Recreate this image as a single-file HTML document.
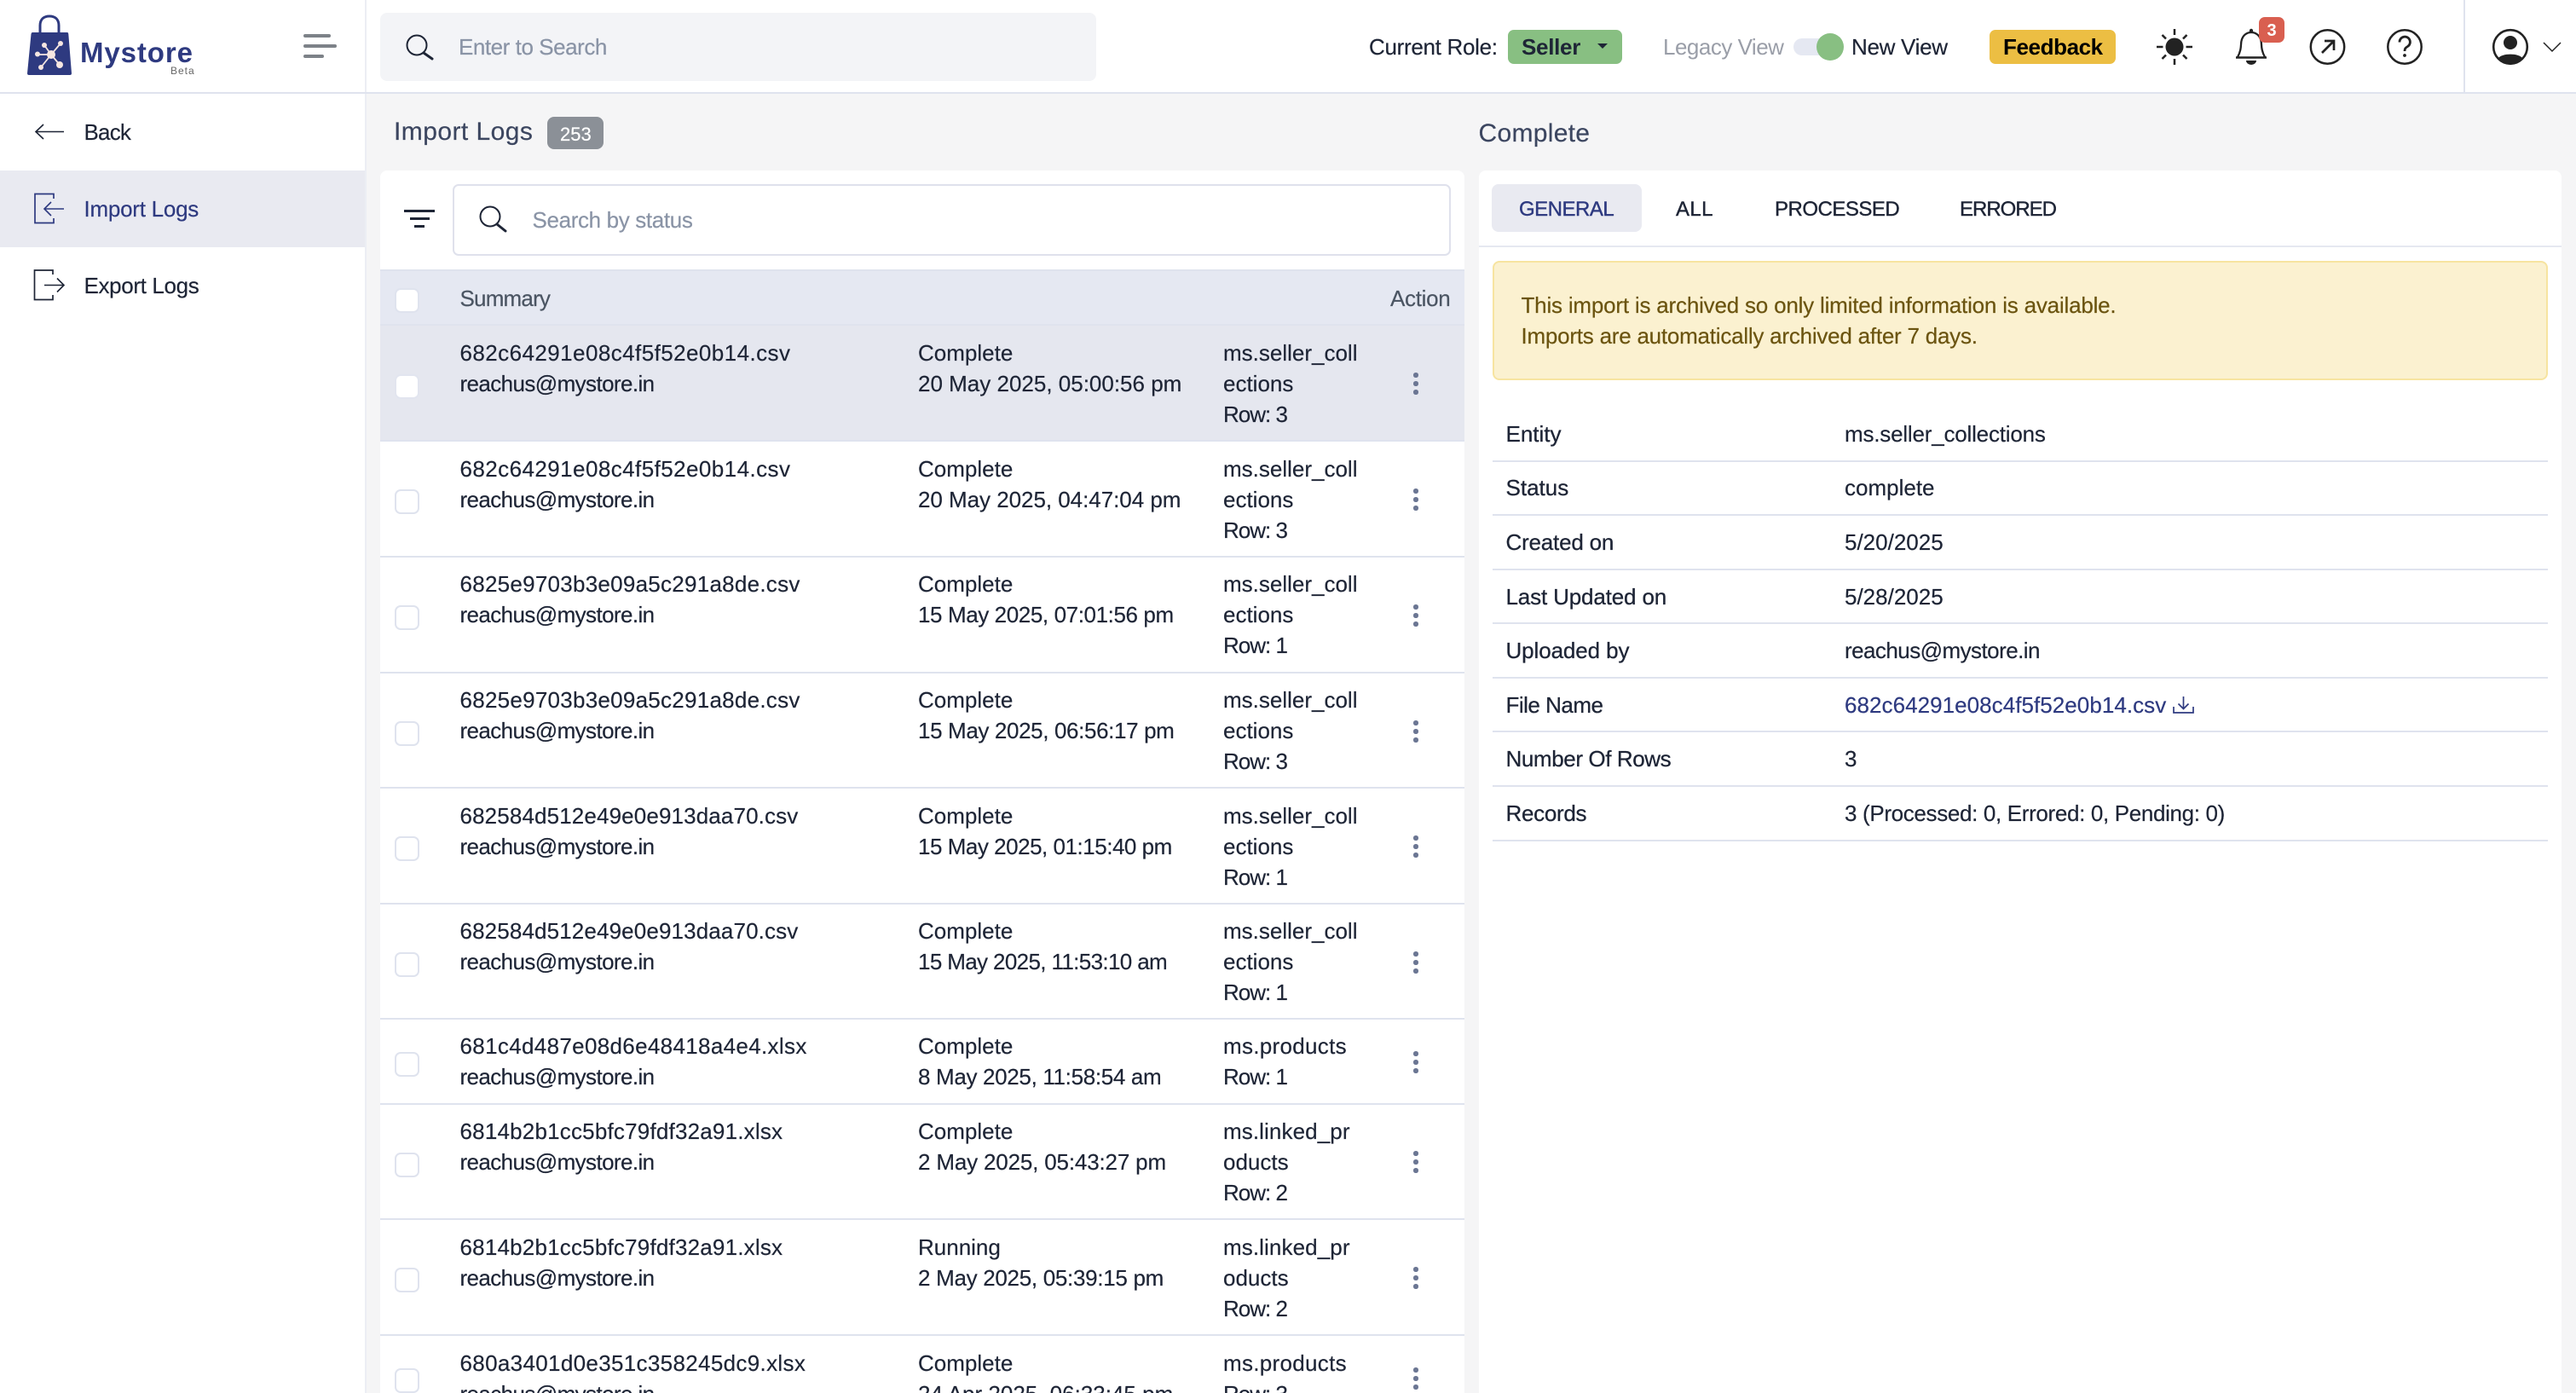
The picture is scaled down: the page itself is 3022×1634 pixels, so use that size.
<!DOCTYPE html>
<html lang="en">
<head>
<meta charset="utf-8">
<title>Import Logs</title>
<style>
*{box-sizing:border-box;margin:0;padding:0}
html,body{width:3022px;height:1634px;overflow:hidden;background:#f5f5f6}
body{position:relative;font-family:"Liberation Sans",sans-serif;font-size:26px;color:#1e2536;line-height:36px}
.a{position:absolute;white-space:nowrap}
.box{position:absolute}
.t{position:absolute;white-space:nowrap;height:36px;line-height:36px;-webkit-text-stroke:.2px currentColor}
.b{font-weight:700;-webkit-text-stroke:0}
#ov{position:absolute;left:0;top:0;width:3022px;height:1634px;pointer-events:none}
.row{position:absolute;left:0;width:1272px;border-bottom:2px solid #dfe3ee;background:#fff}
.row.sel{background:#e5e7ef}
.n{left:93.5px;top:14px;letter-spacing:.4px}
.e{left:93.5px;top:50px;letter-spacing:-.6px}
.s{left:631px;top:14px}
.d{left:631px;top:50px}
.m1{left:989px;top:14px}
.m2{left:989px;top:50px}
.m3{left:989px;top:86px;letter-spacing:-1px}
.u .t{margin-top:-1px}
.cb{position:absolute;left:16.5px;width:29px;height:29px;background:#fff;border:2px solid #dfe3ee;border-radius:7px}
.dots{position:absolute;left:1212px;width:5.5px;height:5.5px;background:#6b7693;border-radius:50%;box-shadow:0 -10px 0 #6b7693,0 10px 0 #6b7693}
.sel .cb{background:#fff;border-color:#e2e5ef}
.lab{left:1766.5px;-webkit-text-stroke:.3px currentColor}
.val{left:2164px}
.ln{position:absolute;left:1751px;width:1238px;height:2px;background:#dfe3ee}
.h{font-size:30px;color:#3c4660}
.tab{font-size:24px;top:228px;font-weight:400;color:#1e2536;-webkit-text-stroke:.4px currentColor}
</style>
</head>
<body>

<!-- top bar -->
<div class="box" style="left:0;top:0;width:3022px;height:110px;background:#fff;border-bottom:2px solid #dfe3ee"></div>
<div class="box" style="left:428px;top:0;width:2px;height:108px;background:#eceef4"></div>
<div class="box" style="left:2890px;top:0;width:2px;height:108px;background:#dfe3ee"></div>
<div class="box" style="left:446px;top:15px;width:840px;height:80px;background:#f3f4f7;border-radius:8px"></div>
<div class="t" style="left:538px;top:37px;color:#8a94a6;letter-spacing:-.45px">Enter to Search</div>

<div class="a" style="left:94px;top:43px;font-size:33px;font-weight:700;color:#2e3a80;letter-spacing:.9px;line-height:38px">Mystore</div>
<div class="a" style="left:200px;top:75px;font-size:12px;color:#666;letter-spacing:1px;line-height:16px">Beta</div>

<div class="t" style="left:1606px;top:37px;letter-spacing:-.3px">Current Role:</div>
<div class="box" style="left:1769px;top:35px;width:134px;height:40px;background:#88bf82;border-radius:7px"></div>
<div class="t b" style="left:1785px;top:37px;letter-spacing:-.3px">Seller</div>
<div class="t" style="left:1951px;top:37px;color:#9a9ea8;letter-spacing:-.5px;-webkit-text-stroke:0">Legacy View</div>
<div class="box" style="left:2104px;top:45px;width:56px;height:20px;background:#e5e8f2;border-radius:10px"></div>
<div class="box" style="left:2131px;top:39px;width:32px;height:32px;background:#88bf82;border-radius:50%"></div>
<div class="t" style="left:2172px;top:37px;letter-spacing:-.3px">New View</div>
<div class="box" style="left:2334px;top:35px;width:148px;height:40px;background:#ecbe43;border-radius:7px"></div>
<div class="t b" style="left:2350px;top:37px;color:#000;letter-spacing:-.4px">Feedback</div>

<!-- sidebar -->
<div class="box" style="left:0;top:110px;width:430px;height:1524px;background:#fff;border-right:2px solid #eceef4"></div>
<div class="box" style="left:0;top:200px;width:428px;height:90px;background:#e9eaf1"></div>
<div class="t" style="left:98.5px;top:137px;letter-spacing:-.8px">Back</div>
<div class="t" style="left:98.5px;top:227px;color:#2e3a80;letter-spacing:-.25px">Import Logs</div>
<div class="t" style="left:98.5px;top:317px;letter-spacing:-.35px">Export Logs</div>

<!-- headings -->
<div class="t h" style="left:462px;top:137px;letter-spacing:.45px">Import Logs</div>
<div class="box" style="left:642px;top:137px;width:66px;height:38px;background:#8b9097;border-radius:8px"></div>
<div class="t" style="left:657px;top:140px;font-size:22px;color:#fff">253</div>
<div class="t h" style="left:1734.5px;top:139px;letter-spacing:.3px">Complete</div>

<!-- left panel -->
<div class="box" style="left:446px;top:200px;width:1272px;height:1434px;background:#fff;border-radius:8px 8px 0 0;overflow:hidden">
  <div class="box" style="left:84.5px;top:16px;width:1171px;height:84px;border:2px solid #dfe1ec;border-radius:7px;background:#fff"></div>
  <div class="t" style="left:178.5px;top:40px;color:#8a94a6;letter-spacing:-.35px">Search by status</div>

  <div class="box" style="left:0;top:116px;width:1272px;height:66px;background:#e5e8f2;border-top:2px solid #dfe3ee;border-bottom:2px solid #dfe3ee"></div>
  <div class="cb" style="top:138px"></div>
  <div class="t" style="left:93.5px;top:132px;color:#4b5563;letter-spacing:-.8px">Summary</div>
  <div class="t" style="left:1185px;top:132px;color:#4b5563;letter-spacing:-.3px">Action</div>

  <div class="row sel" style="top:182px;height:136px">
    <div class="cb" style="top:57px"></div>
    <div class="t n" style="letter-spacing:.43px">682c64291e08c4f5f52e0b14.csv</div><div class="t e">reachus@mystore.in</div>
    <div class="t s">Complete</div><div class="t d">20 May 2025, 05:00:56 pm</div>
    <div class="t m1">ms.seller_coll</div><div class="t m2">ections</div><div class="t m3">Row: 3</div>
    <div class="dots" style="top:65px"></div>
  </div>
  <div class="row" style="top:318px;height:136px">
    <div class="cb" style="top:56px"></div>
    <div class="t n" style="letter-spacing:.43px">682c64291e08c4f5f52e0b14.csv</div><div class="t e">reachus@mystore.in</div>
    <div class="t s">Complete</div><div class="t d" style="letter-spacing:-.04px">20 May 2025, 04:47:04 pm</div>
    <div class="t m1">ms.seller_coll</div><div class="t m2">ections</div><div class="t m3">Row: 3</div>
    <div class="dots" style="top:65px"></div>
  </div>
  <div class="row u" style="top:454px;height:136px">
    <div class="cb" style="top:56px"></div>
    <div class="t n" style="letter-spacing:.26px">6825e9703b3e09a5c291a8de.csv</div><div class="t e">reachus@mystore.in</div>
    <div class="t s">Complete</div><div class="t d" style="letter-spacing:-.4px">15 May 2025, 07:01:56 pm</div>
    <div class="t m1">ms.seller_coll</div><div class="t m2">ections</div><div class="t m3">Row: 1</div>
    <div class="dots" style="top:65px"></div>
  </div>
  <div class="row u" style="top:590px;height:135px">
    <div class="cb" style="top:56px"></div>
    <div class="t n" style="letter-spacing:.26px">6825e9703b3e09a5c291a8de.csv</div><div class="t e">reachus@mystore.in</div>
    <div class="t s">Complete</div><div class="t d" style="letter-spacing:-.37px">15 May 2025, 06:56:17 pm</div>
    <div class="t m1">ms.seller_coll</div><div class="t m2">ections</div><div class="t m3">Row: 3</div>
    <div class="dots" style="top:65px"></div>
  </div>
  <div class="row" style="top:725px;height:136px">
    <div class="cb" style="top:56px"></div>
    <div class="t n" style="letter-spacing:.13px">682584d512e49e0e913daa70.csv</div><div class="t e">reachus@mystore.in</div>
    <div class="t s">Complete</div><div class="t d" style="letter-spacing:-.48px">15 May 2025, 01:15:40 pm</div>
    <div class="t m1">ms.seller_coll</div><div class="t m2">ections</div><div class="t m3">Row: 1</div>
    <div class="dots" style="top:65px"></div>
  </div>
  <div class="row u" style="top:861px;height:135px">
    <div class="cb" style="top:56px"></div>
    <div class="t n" style="letter-spacing:.13px">682584d512e49e0e913daa70.csv</div><div class="t e">reachus@mystore.in</div>
    <div class="t s">Complete</div><div class="t d" style="letter-spacing:-.64px">15 May 2025, 11:53:10 am</div>
    <div class="t m1">ms.seller_coll</div><div class="t m2">ections</div><div class="t m3">Row: 1</div>
    <div class="dots" style="top:65px"></div>
  </div>
  <div class="row u" style="top:996px;height:100px">
    <div class="cb" style="top:38px"></div>
    <div class="t n" style="letter-spacing:.33px">681c4d487e08d6e48418a4e4.xlsx</div><div class="t e">reachus@mystore.in</div>
    <div class="t s">Complete</div><div class="t d" style="letter-spacing:-.33px">8 May 2025, 11:58:54 am</div>
    <div class="t m1" style="letter-spacing:.3px">ms.products</div><div class="t m2" style="letter-spacing:-1px">Row: 1</div>
    <div class="dots" style="top:47px"></div>
  </div>
  <div class="row u" style="top:1096px;height:135px">
    <div class="cb" style="top:56px"></div>
    <div class="t n" style="letter-spacing:.2px">6814b2b1cc5bfc79fdf32a91.xlsx</div><div class="t e">reachus@mystore.in</div>
    <div class="t s">Complete</div><div class="t d" style="letter-spacing:-.17px">2 May 2025, 05:43:27 pm</div>
    <div class="t m1" style="letter-spacing:.1px">ms.linked_pr</div><div class="t m2">oducts</div><div class="t m3">Row: 2</div>
    <div class="dots" style="top:64px"></div>
  </div>
  <div class="row" style="top:1231px;height:136px">
    <div class="cb" style="top:56px"></div>
    <div class="t n" style="letter-spacing:.2px">6814b2b1cc5bfc79fdf32a91.xlsx</div><div class="t e">reachus@mystore.in</div>
    <div class="t s">Running</div><div class="t d" style="letter-spacing:-.3px">2 May 2025, 05:39:15 pm</div>
    <div class="t m1" style="letter-spacing:.1px">ms.linked_pr</div><div class="t m2">oducts</div><div class="t m3">Row: 2</div>
    <div class="dots" style="top:65px"></div>
  </div>
  <div class="row" style="top:1367px;height:100px;border-bottom:0">
    <div class="cb" style="top:38px"></div>
    <div class="t n" style="letter-spacing:.33px">680a3401d0e351c358245dc9.xlsx</div><div class="t e">reachus@mystore.in</div>
    <div class="t s">Complete</div><div class="t d">24 Apr 2025, 06:33:45 pm</div>
    <div class="t m1" style="letter-spacing:.3px">ms.products</div><div class="t m2" style="letter-spacing:-1px">Row: 3</div>
    <div class="dots" style="top:47px"></div>
  </div>
</div>

<!-- right panel -->
<div class="box" style="left:1735px;top:200px;width:1270px;height:1434px;background:#fff;border-radius:8px 8px 0 0"></div>
<div class="box" style="left:1735px;top:288px;width:1270px;height:2px;background:#e6e8f1"></div>
<div class="box" style="left:1750px;top:216px;width:176px;height:56px;background:#e9eaf1;border-radius:8px"></div>
<div class="t tab" style="left:1782px;color:#2e3a80;letter-spacing:-.5px">GENERAL</div>
<div class="t tab" style="left:1966px;letter-spacing:.4px">ALL</div>
<div class="t tab" style="left:2082px;letter-spacing:-.5px">PROCESSED</div>
<div class="t tab" style="left:2299px;letter-spacing:-1px">ERRORED</div>

<div class="box" style="left:1751px;top:306px;width:1238px;height:140px;background:#fbf1d0;border:2px solid #f7e4a0;border-radius:8px"></div>
<div class="t" style="left:1784.5px;top:340px;color:#6b5410;letter-spacing:-.2px">This import is archived so only limited information is available.</div>
<div class="t" style="left:1784.5px;top:376px;color:#6b5410;letter-spacing:-.23px">Imports are automatically archived after 7 days.</div>

<div class="t lab" style="top:491px">Entity</div><div class="t val" style="top:491px;letter-spacing:-.2px">ms.seller_collections</div><div class="ln" style="top:540px"></div>
<div class="t lab" style="top:554px">Status</div><div class="t val" style="top:554px">complete</div><div class="ln" style="top:603px"></div>
<div class="t lab" style="top:618px;letter-spacing:-.2px">Created on</div><div class="t val" style="top:618px">5/20/2025</div><div class="ln" style="top:667px"></div>
<div class="t lab" style="top:682px;letter-spacing:-.15px">Last Updated on</div><div class="t val" style="top:682px">5/28/2025</div><div class="ln" style="top:730px"></div>
<div class="t lab" style="top:745px;letter-spacing:-.1px">Uploaded by</div><div class="t val" style="top:745px;letter-spacing:-.55px">reachus@mystore.in</div><div class="ln" style="top:794px"></div>
<div class="t lab" style="top:809px;letter-spacing:-.5px">File Name</div><div class="t val" style="top:809px;color:#2e3a80;letter-spacing:.05px">682c64291e08c4f5f52e0b14.csv</div><div class="ln" style="top:857px"></div>
<div class="t lab" style="top:872px;letter-spacing:-.4px">Number Of Rows</div><div class="t val" style="top:872px">3</div><div class="ln" style="top:921px"></div>
<div class="t lab" style="top:936px;letter-spacing:-.3px">Records</div><div class="t val" style="top:936px;letter-spacing:-.34px">3 (Processed: 0, Errored: 0, Pending: 0)</div><div class="ln" style="top:985px"></div>

<!-- icons -->
<svg id="ov" viewBox="0 0 3022 1634" xmlns="http://www.w3.org/2000/svg" fill="none">
  <!-- logo -->
  <path d="M47 38V30C47 22 52 19 58 19C64 19 69 22 69 30V38" stroke="#2e3a80" stroke-width="3"/>
  <path d="M38 38H79Q80 38 80.3 40L84 86Q84 88 82 88H34Q32 88 32 86L36.5 40Q37 38 38 38Z" fill="#2e3a80"/>
  <g stroke="#f6e6e1" stroke-width="1.8">
    <path d="M60 64L71 51M60 64L52 53M60 64H44M60 64L48 79M60 64L70 76"/>
  </g>
  <g fill="#f6e6e1">
    <circle cx="60" cy="64" r="5"/><circle cx="71" cy="51" r="3"/><circle cx="52" cy="53" r="3"/>
    <circle cx="44" cy="63.5" r="3"/><circle cx="48" cy="79" r="3"/><circle cx="70" cy="76" r="4"/>
  </g>
  <!-- hamburger -->
  <g fill="#7d8288">
    <rect x="356" y="40" width="32" height="4" rx="2"/><rect x="356" y="52" width="39" height="4" rx="2"/><rect x="356" y="64" width="24" height="4" rx="2"/>
  </g>
  <!-- top search -->
  <g stroke="#1e2536">
    <circle cx="489" cy="53" r="11.5" stroke-width="2"/><path d="M497 62L507 69" stroke-width="3" stroke-linecap="round"/>
  </g>
  <!-- seller caret -->
  <path d="M1874 51H1886L1880 57Z" fill="#1e2536"/>
  <!-- sun -->
  <circle cx="2551" cy="55" r="10.5" fill="#222"/>
  <path d="M2551 34V41M2551 69V76M2530 55H2537.5M2564.5 55H2572M2536.5 41L2541 45.5M2565.5 41L2561 45.5M2536.5 69L2541 64.5M2565.5 69L2561 64.5" stroke="#222" stroke-width="2.5"/>
  <!-- bell -->
  <path d="M2625 67C2630 58 2628.5 52 2629.5 48C2631 41 2636 38 2641 38C2646 38 2651 41 2652.5 48C2653.5 52 2652 58 2657 67" stroke="#222" stroke-width="2.3"/>
  <path d="M2623 67.5H2659" stroke="#222" stroke-width="2.5"/>
  <circle cx="2641" cy="36" r="2.2" fill="#222"/>
  <path d="M2635 71H2647A6 5 0 0 1 2635 71Z" fill="#222"/>
  <rect x="2650" y="20" width="30" height="30" rx="7" fill="#d95f50"/>
  <text x="2665" y="42" font-family="Liberation Sans, sans-serif" font-size="20" font-weight="700" fill="#fff" text-anchor="middle">3</text>
  <!-- arrow circle -->
  <circle cx="2730.5" cy="55" r="19.7" stroke="#222" stroke-width="2.5"/>
  <path d="M2724 62L2738 48M2727 48H2738V59" stroke="#222" stroke-width="2.7"/>
  <!-- help -->
  <circle cx="2821" cy="55" r="19.7" stroke="#222" stroke-width="2.5"/>
  <path d="M2815 49.5A6.2 6.2 0 1 1 2824.5 54.5C2822 56 2821 57 2821 60" stroke="#222" stroke-width="2.8"/>
  <circle cx="2821" cy="65" r="1.9" fill="#222"/>
  <!-- user -->
  <circle cx="2945" cy="55" r="19.8" stroke="#222" stroke-width="2.6"/>
  <circle cx="2945" cy="50" r="8" fill="#222"/>
  <path d="M2930.5 68.5C2935 62 2955 62 2959.5 68.5C2955 74 2950 75.5 2945 75.5C2940 75.5 2935 74 2930.5 68.5Z" fill="#222"/>
  <path d="M2984 50L2994 60L3004 50" stroke="#222" stroke-width="1.5"/>
  <!-- back -->
  <path d="M75 154.500H42M51 146L42 154.500L51 163" stroke="#1e2536" stroke-width="1.6"/>
  <!-- import -->
  <path d="M63 233V227.500H41V261.500H63V256" stroke="#2e3a80" stroke-width="1.7"/>
  <path d="M75 245H52M60 237L52 245L60 253" stroke="#2e3a80" stroke-width="1.6"/>
  <!-- export -->
  <path d="M62 322V317H40.500V351.500H62V346" stroke="#1e2536" stroke-width="1.7"/>
  <path d="M52 334.500H75M67 326.500L75 334.500L67 342.500" stroke="#1e2536" stroke-width="1.6"/>
  <!-- filter -->
  <g fill="#1e2536">
    <rect x="474" y="246" width="36" height="3"/><rect x="481" y="255" width="23" height="3"/><rect x="486" y="264" width="12" height="3"/>
  </g>
  <!-- list search -->
  <circle cx="575" cy="254" r="11.500" stroke="#1e2536" stroke-width="2"/>
  <path d="M583 263L593 271" stroke="#1e2536" stroke-width="3" stroke-linecap="round"/>
  <!-- download -->
  <path d="M2561.500 817V831M2555.500 825.500L2561.500 831.500L2567.500 825.500M2550 829V836H2573V829" stroke="#2e3a80" stroke-width="1.7"/>
</svg>
</body>
</html>
